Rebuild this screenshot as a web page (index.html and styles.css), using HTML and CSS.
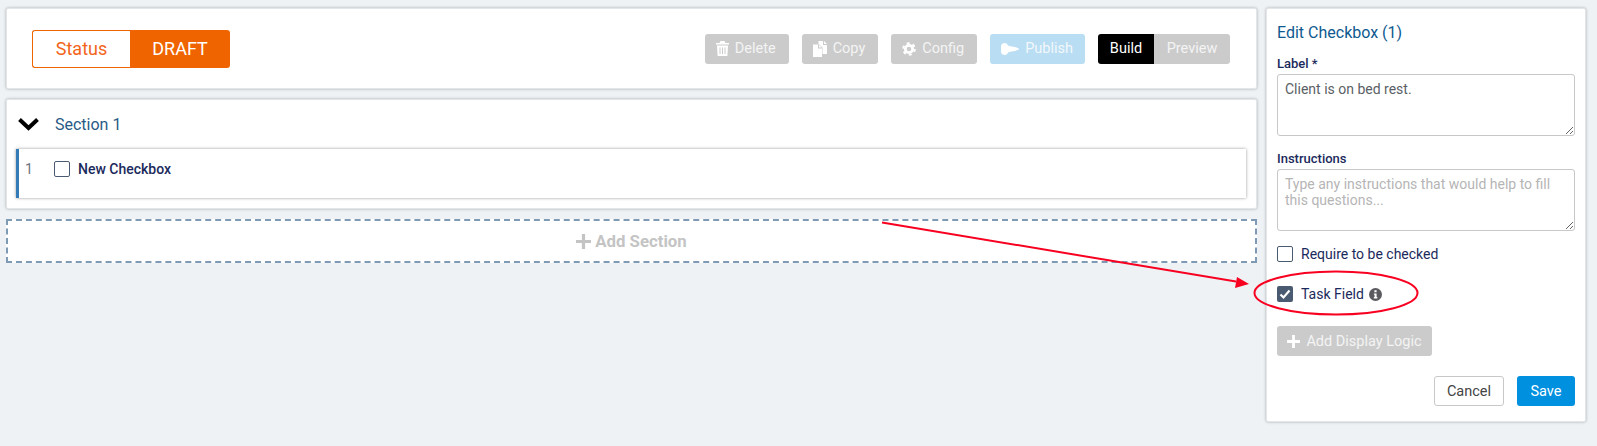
FILE: index.html
```html
<!DOCTYPE html>
<html lang="en">
<head>
    <meta charset="UTF-8">
    <title>Edit Checkbox</title>
    <link rel="stylesheet" href="styles.css">
</head>
<body>
    <div class="builder">
        <div class="main-column">
            <!-- Status and toolbar -->
            <div class="card top-bar">
                <div class="status">
                    <div class="status-label">Status</div>
                    <div class="status-value">DRAFT</div>
                </div>
                <div class="toolbar">
                    <button class="btn btn-off btn-tool">
                        <svg class="icon icon-trash" viewBox="0 0 13 15"><path d="M4.500 0h4l1 2H13v1.500H0V2h3.500zM1 4.500h11L11.400 15H1.600zM3.500 6.500v6.500h1V6.500zM6 6.500v6.500h1V6.500zM8.500 6.500v6.500h1V6.500z" fill-rule="evenodd"/></svg>
                        Delete
                    </button>
                    <button class="btn btn-off btn-tool">
                        <svg class="icon" viewBox="0 0 14 16"><path d="M5.500 0H10v4h4v9H9.500V6.500L6.500 3.500H5.500zM11 0l3 3h-3zM0 3.500h5v4h4V16H0zM6 3.700 8.800 6.500H6z"/></svg>
                        Copy
                    </button>
                    <button class="btn btn-off btn-tool">
                        <svg class="icon" viewBox="0 0 16 16"><circle cx="8" cy="8" r="4.200" fill="none" stroke="currentColor" stroke-width="3.200"/><circle cx="8" cy="8" r="6.600" fill="none" stroke="currentColor" stroke-width="2.400" stroke-dasharray="3.400 3.510"/></svg>
                        Config
                    </button>
                    <button class="btn btn-publish btn-tool">
                        <svg class="icon icon-wide" viewBox="0 0 18 12"><path d="M0 3C0 1 2 0 4 0c2 0 2 2 4 3l6 1c2 .5 4 1.500 4 2s-2 1.500-4 2l-6 1c-2 1-2 3-4 3-2 0-4-1-4-3z"/></svg>
                        Publish
                    </button>
                    <div class="mode-switch">
                        <button class="mode mode-on">Build</button>
                        <button class="mode">Preview</button>
                    </div>
                </div>
            </div>

            <!-- Section with its questions -->
            <div class="card section">
                <div class="section-head">
                    <svg class="chevron" viewBox="0 0 23 14"><path d="M2.500 2.500 11.500 11l9-8.500" fill="none" stroke="#000" stroke-width="4"/></svg>
                    <span class="section-title">Section 1</span>
                </div>
                <div class="question">
                    <span class="question-num">1</span>
                    <span class="check"></span>
                    <span class="question-text">New Checkbox</span>
                </div>
            </div>

            <div class="add-section">
                <svg class="plus" viewBox="0 0 14 14"><path d="M5.500 0h3v5.500H14v3H8.500V14h-3V8.500H0v-3h5.500z"/></svg>
                Add Section
            </div>
        </div>

        <!-- Edit panel -->
        <div class="card side-panel">
            <h2 class="panel-title">Edit Checkbox (1)</h2>
            <label class="field-label">Label *</label>
            <textarea class="field-input">Client is on bed rest.</textarea>
            <label class="field-label field-label-second">Instructions</label>
            <textarea class="field-input" placeholder="Type any instructions that would help to fill this questions..."></textarea>

            <div class="check-row check-row-first">
                <span class="check"></span>
                <span class="check-text">Require to be checked</span>
            </div>
            <div class="check-row check-row-second">
                <span class="check check-on">
                    <svg viewBox="0 0 16 16"><path d="M3.500 8.500 6.500 11.500 12.500 4.500" fill="none" stroke="#fff" stroke-width="2.200"/></svg>
                </span>
                <span class="check-text">Task Field</span>
                <svg class="info" viewBox="0 0 14 14"><circle cx="7" cy="7" r="7" fill="#5a5a5f"/><path d="M5.800 2.500h2.400v2H5.800zM5.300 5.800h2.900v4h.8v1.500H5.200V9.800h.8V7.300h-.7z" fill="#fff"/></svg>
            </div>

            <button class="btn btn-off btn-logic">
                <svg class="plus-small" viewBox="0 0 14 14"><path d="M5.500 0h3v5.500H14v3H8.500V14h-3V8.500H0v-3h5.500z"/></svg>
                Add Display Logic
            </button>

            <div class="panel-actions">
                <button class="btn btn-cancel">Cancel</button>
                <button class="btn btn-save">Save</button>
            </div>
        </div>
    </div>

    <!-- Red annotation drawn over the screenshot -->
    <svg class="annotation" viewBox="0 0 1597 446">
        <path d="M882 222.500 1236 281.500" fill="none" stroke="#f80020" stroke-width="2"/>
        <path d="M1249 284 1237 277 1235 288z" fill="#f80020"/>
        <ellipse cx="1336" cy="293" rx="81.500" ry="21.500" fill="none" stroke="#f80020" stroke-width="2"/>
    </svg>
</body>
</html>
```

FILE: styles.css
```css
/* Basic reset and body styling */
* {
    margin: 0;
    padding: 0;
    box-sizing: border-box;
}

body {
    font-family: 'Roboto', sans-serif;
    color: #1b2a5c;
    background-color: #eef2f5;
    height: 446px;
    overflow: hidden;
}

button {
    font-family: 'Roboto', sans-serif;
    border: none;
}

/* Two column layout */
.builder {
    display: flex;
    align-items: flex-start;
    gap: 9px;
    padding: 8px 0 0 6px;
}

.main-column {
    width: 1251px;
    display: flex;
    flex-direction: column;
}

.card {
    background: #fff;
    border: 1px solid #e3e6e9;
    border-radius: 2px;
    box-shadow: 0px 0px 3px rgba(0, 0, 0, 0.3);
}

/* Top bar */
.top-bar {
    height: 81px;
    padding: 0 26px 0 25px;
    display: flex;
    align-items: center;
    justify-content: space-between;
}

.status {
    display: flex;
    width: 198px;
    height: 38px;
    font-size: 18px;
}

.status-label {
    width: 98px;
    display: flex;
    align-items: center;
    justify-content: center;
    color: #f2641a;
    border: 1px solid #f06400;
    border-right: none;
    border-radius: 3px 0 0 3px;
}

.status-value {
    width: 100px;
    display: flex;
    align-items: center;
    justify-content: center;
    color: #fff;
    background-color: #f06400;
    border-radius: 0 3px 3px 0;
}

.toolbar {
    display: flex;
    align-items: center;
    gap: 13px;
}

.btn {
    height: 30px;
    padding: 0 10px;
    display: inline-flex;
    align-items: center;
    justify-content: center;
    gap: 5px;
    font-size: 14.5px;
    border-radius: 3px;
}

.btn-tool {
    padding: 0 13px 0 11px;
    gap: 6px;
}

.btn-off {
    color: #f4f4f4;
    background-color: #cbcbcb;
}

.btn-publish {
    padding-right: 12px;
    color: #f2f8fc;
    background-color: #b9ddf2;
}

.icon {
    width: 14px;
    height: 16px;
    fill: currentColor;
    color: #fff;
}

.icon-trash {
    width: 13px;
    height: 15px;
}

.icon-wide {
    width: 18px;
    height: 12px;
}

.mode-switch {
    display: flex;
}

.mode {
    height: 30px;
    font-size: 14.5px;
    color: #f4f4f4;
    background-color: #cbcbcb;
    width: 76px;
    border-radius: 0 3px 3px 0;
}

.mode-on {
    color: #fff;
    background-color: #000;
    width: 56px;
    border-radius: 3px 0 0 3px;
}

/* Section card */
.section {
    height: 110px;
    margin-top: 10px;
    padding: 0 10px 0 9px;
}

.section-head {
    height: 49px;
    display: flex;
    align-items: center;
    gap: 15px;
    padding: 0 0 1px 1px;
}

.chevron {
    width: 23px;
    height: 14px;
}

.section-title {
    font-size: 16px;
    color: #2a5a85;
}

.question {
    height: 49px;
    display: flex;
    align-items: flex-start;
    padding: 12px 0 0 6px;
    background: #fff;
    border-left: 3px solid #337ab7;
    box-shadow: 0px 0px 3px rgba(0, 0, 0, 0.4);
    font-size: 14px;
}

.question-num {
    width: 29px;
    color: #6b7280;
    font-size: 14px;
    line-height: 16px;
}

.question-text {
    margin-left: 8px;
    font-weight: 500;
    line-height: 16px;
}

.check {
    width: 16px;
    height: 16px;
    flex: none;
    border: 1px solid #4a5a70;
    border-radius: 2px;
    background: #fff;
}

.check svg {
    display: block;
}

.check-on {
    background-color: #4a5a70;
    border: none;
}

/* Add section */
.add-section {
    height: 44px;
    margin-top: 10px;
    display: flex;
    align-items: center;
    justify-content: center;
    gap: 4px;
    font-size: 16.8px;
    font-weight: 700;
    color: #c4c4c4;
    background: #fff;
    border: 2px dashed #7f9ab5;
}

.plus {
    width: 15px;
    height: 15px;
    fill: #c4c4c4;
}

/* Edit panel */
.side-panel {
    width: 320px;
    height: 414px;
    padding: 14px 10px 0;
}

.panel-title {
    font-size: 16px;
    font-weight: 400;
    line-height: 19px;
    color: #0f5a8f;
}

.field-label {
    display: block;
    margin-top: 14px;
    font-size: 13px;
    font-weight: 500;
    line-height: 16px;
}

.field-label-second {
    margin-top: 15px;
}

.field-input {
    display: block;
    width: 298px;
    height: 62px;
    margin-top: 2px;
    padding: 6px 7px;
    font-family: 'Roboto', sans-serif;
    font-size: 14px;
    line-height: 16px;
    color: #5a5f66;
    border: 1px solid #c8c8c8;
    border-radius: 3px;
}

.field-input::placeholder {
    color: #b5b5b5;
}

.check-row {
    display: flex;
    align-items: center;
    font-size: 14px;
}

.check-row-first {
    margin-top: 15px;
}

.check-row-second {
    margin-top: 24px;
}

.check-text {
    margin-left: 8px;
}

.info {
    width: 13px;
    height: 13px;
    margin-left: 5px;
}

.btn-logic {
    width: 155px;
    margin-top: 24px;
    gap: 6px;
}

.plus-small {
    width: 13px;
    height: 13px;
    fill: #fff;
}

.panel-actions {
    display: flex;
    justify-content: flex-end;
    gap: 13px;
    margin-top: 20px;
}

.btn-cancel {
    width: 70px;
    color: #444;
    background: #fff;
    border: 1px solid #c8c8c8;
}

.btn-save {
    width: 58px;
    color: #fff;
    background-color: #0090e0;
}

/* Annotation layer */
.annotation {
    position: absolute;
    top: 0;
    left: 0;
    width: 1597px;
    height: 446px;
    pointer-events: none;
}
```
